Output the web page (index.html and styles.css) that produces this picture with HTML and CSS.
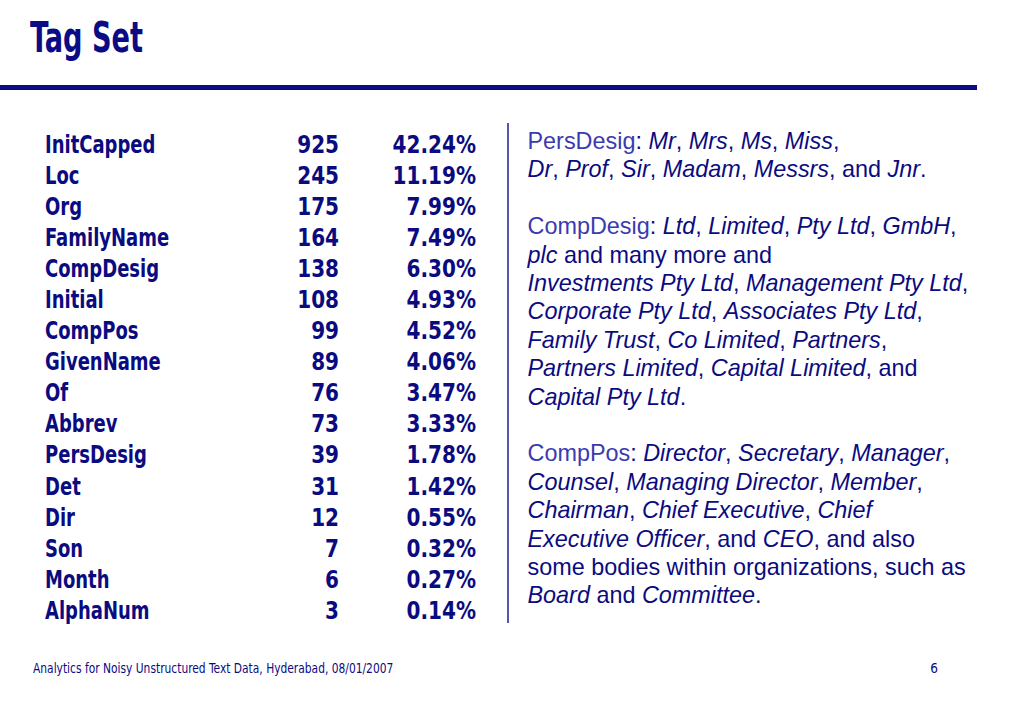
FILE: index.html
```html
<!DOCTYPE html>
<html lang="en">
<head>
<meta charset="utf-8">
<title>Tag Set</title>
<link rel="stylesheet" href="styles.css">
</head>
<body>
<div class="slide">
  <header class="title-bar">
    <h1 class="title">Tag Set</h1>
  </header>
  <div class="rule"></div>
  <main class="content">
    <div class="tags">
      <span class="name">InitCapped</span><span class="num">925</span><span class="pct">42.24%</span>
      <span class="name">Loc</span><span class="num">245</span><span class="pct">11.19%</span>
      <span class="name">Org</span><span class="num">175</span><span class="pct">7.99%</span>
      <span class="name">FamilyName</span><span class="num">164</span><span class="pct">7.49%</span>
      <span class="name">CompDesig</span><span class="num">138</span><span class="pct">6.30%</span>
      <span class="name">Initial</span><span class="num">108</span><span class="pct">4.93%</span>
      <span class="name">CompPos</span><span class="num">99</span><span class="pct">4.52%</span>
      <span class="name">GivenName</span><span class="num">89</span><span class="pct">4.06%</span>
      <span class="name">Of</span><span class="num">76</span><span class="pct">3.47%</span>
      <span class="name">Abbrev</span><span class="num">73</span><span class="pct">3.33%</span>
      <span class="name">PersDesig</span><span class="num">39</span><span class="pct">1.78%</span>
      <span class="name">Det</span><span class="num">31</span><span class="pct">1.42%</span>
      <span class="name">Dir</span><span class="num">12</span><span class="pct">0.55%</span>
      <span class="name">Son</span><span class="num">7</span><span class="pct">0.32%</span>
      <span class="name">Month</span><span class="num">6</span><span class="pct">0.27%</span>
      <span class="name">AlphaNum</span><span class="num">3</span><span class="pct">0.14%</span>
    </div>
    <div class="divider"></div>
    <div class="notes">
      <p><span class="tag">PersDesig</span>: <i>Mr</i>, <i>Mrs</i>, <i>Ms</i>, <i>Miss</i>,<br><i>Dr</i>, <i>Prof</i>, <i>Sir</i>, <i>Madam</i>, <i>Messrs</i>, and <i>Jnr</i>.</p>
      <p><span class="tag">CompDesig</span>: <i>Ltd</i>, <i>Limited</i>, <i>Pty Ltd</i>, <i>GmbH</i>,<br><i>plc</i> and many more and<br><i>Investments Pty Ltd</i>, <i>Management Pty Ltd</i>,<br><i>Corporate Pty Ltd</i>, <i>Associates Pty Ltd</i>,<br><i>Family Trust</i>, <i>Co Limited</i>, <i>Partners</i>,<br><i>Partners Limited</i>, <i>Capital Limited</i>, and<br><i>Capital Pty Ltd</i>.</p>
      <p><span class="tag">CompPos</span>: <i>Director</i>, <i>Secretary</i>, <i>Manager</i>,<br><i>Counsel</i>, <i>Managing Director</i>, <i>Member</i>,<br><i>Chairman</i>, <i>Chief Executive</i>, <i>Chief</i><br><i>Executive Officer</i>, and <i>CEO</i>, and also<br>some bodies within organizations, such as<br><i>Board</i> and <i>Committee</i>.</p>
    </div>
  </main>
  <footer class="footer">
    <span class="footer-text">Analytics for Noisy Unstructured Text Data, Hyderabad, 08/01/2007</span>
    <span class="page-num">6</span>
  </footer>
</div>
</body>
</html>
```

FILE: styles.css
```css
html, body {
  margin: 0;
  padding: 0;
  background: #ffffff;
}

.slide {
  width: 1023px;
  height: 708px;
  display: flex;
  flex-direction: column;
  color: #0b0b80;
  overflow: hidden;
}

.title-bar {
  padding: 17px 0 0 30px;
}

.title {
  margin: 0;
  font-family: "DejaVu Sans Condensed", "DejaVu Sans", sans-serif;
  font-weight: bold;
  font-size: 42px;
  line-height: 42px;
  color: #0b0b86;
  transform: scaleX(0.72);
  transform-origin: left center;
}

.rule {
  margin-top: 26px;
  width: 977px;
  height: 5px;
  background: #0b0b86;
}

.content {
  display: flex;
  align-items: flex-start;
  padding-top: 33px;
}

.tags {
  display: grid;
  grid-template-columns: 210px 84px 137px;
  margin: 5.5px 0 0 45px;
  font-family: "DejaVu Sans Condensed", "DejaVu Sans", sans-serif;
  font-weight: bold;
  font-size: 25px;
  line-height: 31.1px;
  color: #0b0b80;
}

.name {
  white-space: nowrap;
  transform: scaleX(0.8);
  transform-origin: left center;
}

.num, .pct {
  text-align: right;
  white-space: nowrap;
  transform: scaleX(0.89);
  transform-origin: right center;
}

.divider {
  width: 1.5px;
  height: 500px;
  margin-left: 31px;
  background: #5656aa;
}

.notes {
  margin: 4px 0 0 19px;
  font-family: "Liberation Sans", Arial, sans-serif;
  font-size: 23.4px;
  line-height: 28.4px;
  white-space: nowrap;
  color: #0b0b80;
}

.notes p {
  margin: 0 0 28.4px 0;
}

.tag {
  color: #3b3bb0;
}

.footer {
  margin-top: auto;
  display: flex;
  justify-content: space-between;
  align-items: center;
  width: 905px;
  padding: 0 0 32px 33px;
  font-family: "DejaVu Sans Condensed", "DejaVu Sans", sans-serif;
  font-size: 13.5px;
  line-height: 16px;
  color: #0b0b80;
}

.footer-text {
  transform: scaleX(0.88);
  transform-origin: left center;
}
```
